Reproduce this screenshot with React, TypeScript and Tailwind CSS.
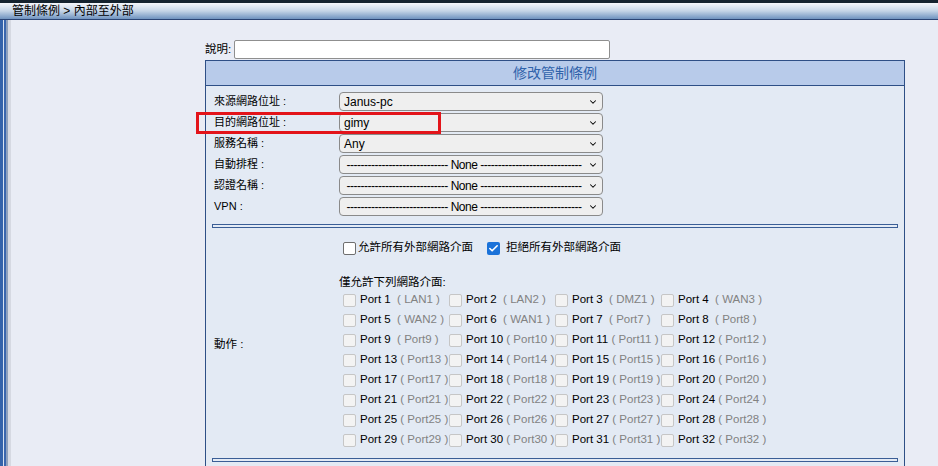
import { Check, ChevronDown } from "lucide-react";

const font = { fontFamily: '"Liberation Sans", Arial, "Noto Sans CJK TC", sans-serif' };

const rows = [
  { label: "來源網路位址 :", value: "Janus-pc" },
  { label: "目的網路位址 :", value: "gimy" },
  { label: "服務名稱 :", value: "Any" },
  { label: "自動排程 :", value: "none" },
  { label: "認證名稱 :", value: "none" },
  { label: "VPN :", value: "none" },
];

const portNames: Record<number, string> = {
  1: "LAN1",
  2: "LAN2",
  3: "DMZ1",
  4: "WAN3",
  5: "WAN2",
  6: "WAN1",
};

const Select = ({ value }: { value: string }) => (
  <div className="w-[264px] h-[19px] border border-[#8a8a8a] rounded-[4px] bg-[#efefef] flex items-center pl-[4px] pr-[4px] text-[12px] text-black">
    {value === "none" ? (
      <span className="flex-1 overflow-hidden whitespace-nowrap text-center tracking-[-0.5px]">
        ----------------------------- None -----------------------------
      </span>
    ) : (
      <span className="flex-1">{value}</span>
    )}
    <ChevronDown className="w-[10px] h-[10px] ml-[4px] shrink-0" strokeWidth={2.5} />
  </div>
);

const Separator = () => (
  <div className="mx-[6px] h-[4px] border border-[#3a5e96] bg-[#e4ebf5]" />
);

const PortBox = () => (
  <span className="inline-block w-[13px] h-[13px] border border-[#c6c6c6] rounded-[2px] bg-[#f3f3f3] ml-[4px] mr-[4px] shrink-0" />
);

const App = () => {
  const ports = Array.from({ length: 32 }, (_, i) => i + 1);

  return (
    <div className="w-[938px] h-[466px] overflow-hidden bg-[#e9ecf5] flex flex-col relative" style={font}>
      <div className="h-[3px] shrink-0 bg-[#14222e]" />
      <div className="h-[17px] shrink-0 flex items-center pl-[12px] bg-gradient-to-b from-[#f4f6fa] via-[#c4d4e6] to-[#6f93bf] border-b border-[#2a4474] text-[12px] text-black leading-none">
        管制條例 &gt; 內部至外部
      </div>

      <div className="flex flex-1">
        <div className="flex shrink-0">
          <div className="w-[3px] bg-[#3563aa]" />
          <div className="w-[1px] bg-[#d8e2f0]" />
          <div className="w-[2px] bg-[#3a66ad]" />
          <div className="w-[2px] bg-[#8da0bd]" />
          <div className="w-[3px] bg-[#d6d9e2]" />
        </div>

        <div className="pl-[194px] pt-[20px]">
          <div className="flex items-center h-[19px]">
            <span className="text-[11.5px] text-black w-[29px]">說明:</span>
            <div className="w-[376px] h-[19px] bg-white border border-[#8f8f8f] rounded-[2px]" />
          </div>

          <div className="mt-[1px] w-[700px] border border-[#2e4f86] bg-[#e3eaf4]">
            <div className="h-[25px] bg-[#b8cbea] border-b border-[#2e4f86] flex items-center justify-center text-[14px] text-[#2f62aa]">
              修改管制條例
            </div>

            <div className="pt-[6px] flex flex-col gap-[2px]">
              {rows.map((r) => (
                <div key={r.label} className="flex items-center h-[19px] pl-[8px] text-[11px] text-black">
                  <span className="w-[125px]">{r.label}</span>
                  <Select value={r.value} />
                </div>
              ))}
            </div>

            <div className="mt-[8px]">
              <Separator />
            </div>

            <div className="flex h-[230px]">
              <div className="w-[133px] pl-[8px] flex items-center text-[11.5px] text-black pt-[3px]">動作 :</div>
              <div className="flex flex-col text-black">
                <div className="flex items-center h-[16px] mt-[12px] text-[11.5px]">
                  <span className="inline-block w-[13px] h-[13px] border border-[#6f6f6f] rounded-[2px] bg-white ml-[4px] mr-[2px]" />
                  <span>允許所有外部網路介面</span>
                  <span className="w-[17px] h-[13px] ml-[14px] mr-[2px] inline-flex">
                    <span className="w-[13px] h-[13px] rounded-[2px] bg-[#1a72d9] flex items-center justify-center">
                      <Check className="w-[11px] h-[11px] text-white" strokeWidth={3.5} />
                    </span>
                  </span>
                  <span>拒絕所有外部網路介面</span>
                </div>

                <div className="mt-[19px] h-[16px] flex items-center text-[11.5px]">僅允許下列網路介面:</div>

                <div className="grid grid-cols-[106px_106px_106px_106px] mt-[-1px] text-[11.5px]">
                  {ports.map((p) => (
                    <div key={p} className="flex items-center h-[20px] whitespace-nowrap">
                      <PortBox />
                      <span className="text-black">Port {p}</span>
                      <span className="text-[#828282]">
                        {p < 10 ? "\u00a0\u00a0(\u00a0" : "\u00a0(\u00a0"}
                        {portNames[p] ?? `Port${p}`}
                        {"\u00a0)"}
                      </span>
                    </div>
                  ))}
                </div>
              </div>
            </div>

            <Separator />
            <div className="h-[20px]" />
          </div>
        </div>
      </div>

      <div className="absolute left-[196px] top-[112px] w-[245px] h-[22px] border-[3px] border-[#e3141a]" />
    </div>
  );
};

export default App;
